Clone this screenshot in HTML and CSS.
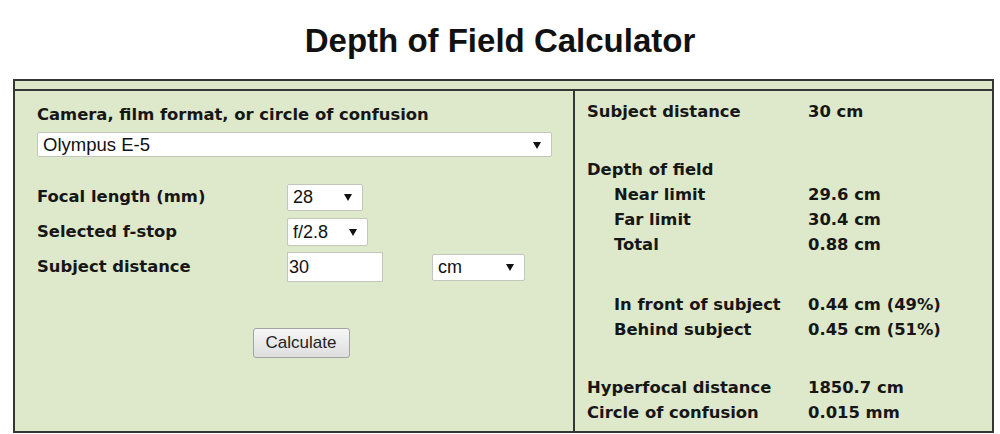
FILE: index.html
```html
<!DOCTYPE html>
<html lang="en">
<head>
<meta charset="utf-8">
<title>Depth of Field Calculator</title>
<link rel="stylesheet" href="styles.css">
</head>
<body>
<h1 class="title">Depth of Field Calculator</h1>
<div class="panel">
  <div class="panel-top"></div>
  <div class="panel-body">
    <div class="inputs">
      <div class="label">Camera, film format, or circle of confusion</div>
      <span class="select select-camera">
        <select><option>Olympus E-5</option></select>
      </span>
      <div class="fields">
        <div class="field">
          <span class="label">Focal length (mm)</span>
          <span class="select select-focal"><select><option>28</option></select></span>
        </div>
        <div class="field">
          <span class="label">Selected f-stop</span>
          <span class="select select-fstop"><select><option>f/2.8</option></select></span>
        </div>
        <div class="field">
          <span class="label">Subject distance</span>
          <div class="distance">
            <input class="text-input" type="text" value="30">
            <span class="select select-unit"><select><option>cm</option></select></span>
          </div>
        </div>
      </div>
      <div class="actions">
        <button class="button" type="button">Calculate</button>
      </div>
    </div>
    <div class="results">
      <div class="group">
        <div class="row"><span>Subject distance</span><span>30 cm</span></div>
      </div>
      <div class="group group-dof">
        <div class="row"><span>Depth of field</span><span></span></div>
        <div class="row sub"><span>Near limit</span><span>29.6 cm</span></div>
        <div class="row sub"><span>Far limit</span><span>30.4 cm</span></div>
        <div class="row sub"><span>Total</span><span>0.88 cm</span></div>
      </div>
      <div class="group group-split">
        <div class="row sub"><span>In front of subject</span><span>0.44 cm (49%)</span></div>
        <div class="row sub"><span>Behind subject</span><span>0.45 cm (51%)</span></div>
      </div>
      <div class="group group-hyper">
        <div class="row"><span>Hyperfocal distance</span><span>1850.7 cm</span></div>
        <div class="row"><span>Circle of confusion</span><span>0.015 mm</span></div>
      </div>
    </div>
  </div>
</div>
</body>
</html>
```
FILE: styles.css
```css
* { box-sizing: border-box; }

body {
  margin: 0;
  background: #ffffff;
  font-family: "DejaVu Sans", Verdana, sans-serif;
  color: #161616;
}

.title {
  margin: 22px 0 19px;
  font-family: "Liberation Sans", Arial, sans-serif;
  font-size: 33px;
  line-height: 38px;
  font-weight: bold;
  text-align: center;
  color: #111;
}

.panel {
  margin-left: 13px;
  width: 981px;
  border: 2px solid #333833;
  background: #dee8ca;
}

.panel-top {
  height: 10px;
  border-bottom: 2px solid #333833;
}

.panel-body {
  display: grid;
  grid-template-columns: 560px 1fr;
}

.inputs {
  border-right: 2px solid #333833;
  padding: 14px 8px 0 22px;
}

.label {
  font-size: 16.4px;
  line-height: 20px;
  font-weight: bold;
}

.select {
  position: relative;
  display: inline-block;
}

.select select {
  appearance: none;
  -webkit-appearance: none;
  display: block;
  width: 100%;
  height: 100%;
  margin: 0;
  border: 1px solid #c2c6bd;
  border-radius: 2px;
  background: #ffffff;
  font-family: "Liberation Sans", Arial, sans-serif;
  font-size: 18px;
  color: #111;
  padding: 0 0 0 5px;
}

.select::after {
  content: "";
  position: absolute;
  right: 11px;
  top: 50%;
  margin-top: -3px;
  border-left: 4px solid transparent;
  border-right: 4px solid transparent;
  border-top: 7px solid #111;
}

.select-camera {
  display: block;
  margin-top: 7px;
  width: 515px;
  height: 25px;
}

.select-camera select { font-size: 18.5px; }

.fields {
  margin-top: 25px;
  display: flex;
  flex-direction: column;
  gap: 5px;
}

.field {
  display: grid;
  grid-template-columns: 250px 1fr;
  align-items: center;
  height: 30px;
}

.select-focal { width: 76px; height: 27px; }
.select-fstop { width: 81px; height: 28px; }
.select-unit { width: 93px; height: 27px; }

.distance {
  display: flex;
  align-items: center;
  gap: 49px;
}

.text-input {
  width: 96px;
  height: 30px;
  margin: 0;
  border: 1px solid #c2c6bd;
  background: #fff;
  font-family: "Liberation Sans", Arial, sans-serif;
  font-size: 18px;
  color: #111;
  padding: 0 0 0 1px;
}

.actions {
  margin-top: 46px;
  text-align: center;
}

.button {
  width: 97px;
  height: 30px;
  border: 1px solid #a4a4a4;
  border-radius: 3px;
  background: linear-gradient(#f6f6f6, #dedede);
  font-family: "Liberation Sans", Arial, sans-serif;
  font-size: 17px;
  color: #222;
  padding: 0;
}

.results {
  padding: 8px 0 6px 12px;
}

.group-dof { margin-top: 33px; }
.group-split { margin-top: 35px; }
.group-hyper { margin-top: 33px; }

.row {
  display: grid;
  grid-template-columns: 221px 1fr;
  height: 25px;
  line-height: 25px;
  font-size: 16.4px;
  font-weight: bold;
  white-space: nowrap;
}

.row.sub span:first-child {
  padding-left: 27px;
}
```
